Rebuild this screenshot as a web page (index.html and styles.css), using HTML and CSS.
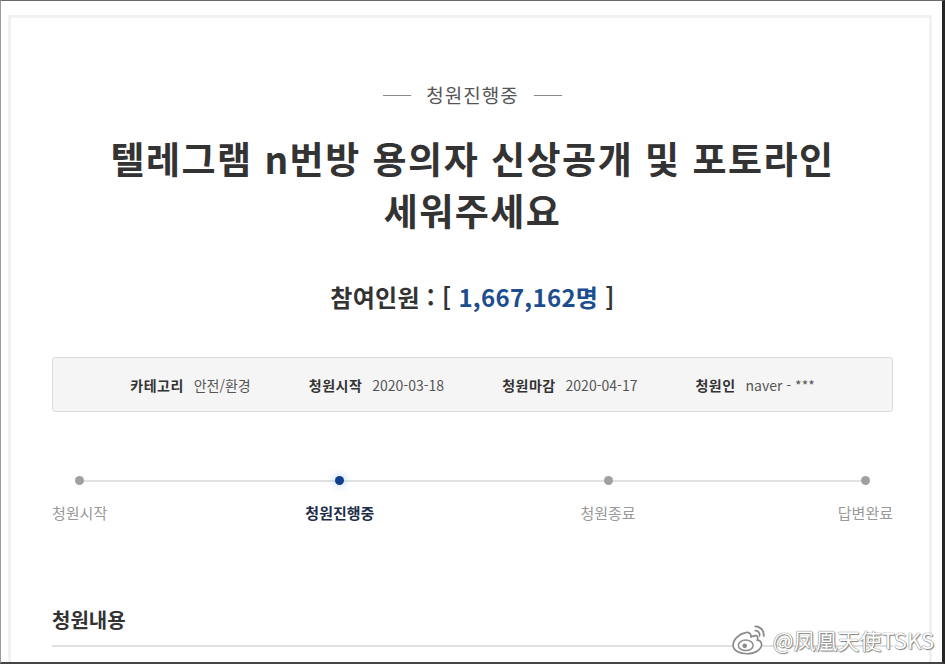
FILE: index.html
```html
<!DOCTYPE html>
<html lang="ko">
<head>
  <meta charset="utf-8">
  <title>청원진행중 - 텔레그램 n번방 용의자 신상공개 및 포토라인 세워주세요</title>
  <link rel="stylesheet" href="styles.css">
</head>
<body>
  <div class="frame">
    <div class="card">
      <div class="tag"><span class="dash"></span>청원진행중<span class="dash"></span></div>

      <h1 class="title">텔레그램 n번방 용의자 신상공개 및 포토라인<br>세워주세요</h1>

      <div class="count">참여인원 : [ <span class="num">1,667,162명</span> ]</div>

      <div class="info">
        <div class="info-item"><b>카테고리</b> 안전/환경</div>
        <div class="info-item"><b>청원시작</b> 2020-03-18</div>
        <div class="info-item"><b>청원마감</b> 2020-04-17</div>
        <div class="info-item"><b>청원인</b> naver - ***</div>
      </div>

      <div class="steps">
        <div class="step"><span class="dot"></span>청원시작</div>
        <div class="step active"><span class="dot"></span>청원진행중</div>
        <div class="step"><span class="dot"></span>청원종료</div>
        <div class="step"><span class="dot"></span>답변완료</div>
      </div>

      <h2 class="section">청원내용</h2>
    </div>

    <div class="watermark">
      <svg class="weibo" width="38" height="34" viewBox="0 0 36 32">
        <path d="M14 10c-6 1-12 6-12 12 0 5 6 8 13 8 8 0 14-4 14-9 0-3-3-4-4-4 1-3 0-5-3-4l-3 1c0-3-2-5-5-4z" fill="#fff" stroke="#8a8a8a" stroke-width="1.6"/>
        <ellipse cx="14" cy="22" rx="7" ry="5" fill="#fff" stroke="#8a8a8a" stroke-width="1.4"/>
        <circle cx="13" cy="22.5" r="2.2" fill="#8a8a8a"/>
        <path d="M23 4a8 8 0 0 1 8 9" fill="none" stroke="#8a8a8a" stroke-width="1.8" stroke-linecap="round"/>
        <path d="M23 8a4 4 0 0 1 4 5" fill="none" stroke="#8a8a8a" stroke-width="1.6" stroke-linecap="round"/>
      </svg>
      <span>@凤凰天使TSKS</span>
    </div>
  </div>
</body>
</html>
```

FILE: styles.css
```css
* {
  box-sizing: border-box;
  margin: 0;
  padding: 0;
}

body {
  font-family: "Noto Sans CJK KR", "Noto Sans", sans-serif;
  background-color: #fff;
  color: #333;
}

.frame {
  position: relative;
  width: 945px;
  height: 664px;
  overflow: hidden;
  border-top: 1px solid #6a6a6a;
  border-left: 1px solid #9a9a9a;
  border-right: 3px solid #262626;
  border-bottom: 2px solid #444;
  padding: 14px 10px 0 7px;
}

.card {
  height: 100%;
  border: 3px solid #f1f1f1;
  border-bottom: 0;
  padding: 65px 36px 0 41px;
}

/* status tag */
.tag {
  display: flex;
  justify-content: center;
  align-items: center;
  gap: 15px;
  font-size: 19px;
  line-height: 24px;
  letter-spacing: 1px;
  color: #555;
}
.dash {
  width: 28px;
  height: 1px;
  background-color: #888;
}

.title {
  margin-top: 25px;
  text-align: center;
  font-size: 37px;
  line-height: 52px;
  font-weight: bold;
  color: #333;
  letter-spacing: 1.5px;
}

.count {
  margin-top: 45px;
  text-align: center;
  font-size: 24px;
  line-height: 32px;
  font-weight: bold;
  letter-spacing: 0.3px;
  color: #333;
}
.count .num {
  color: #1c4e8e;
}

/* info box */
.info {
  margin-top: 44px;
  height: 55px;
  display: flex;
  justify-content: center;
  align-items: center;
  gap: 58px;
  background-color: #f5f5f5;
  border: 1px solid #dcdcdc;
  border-radius: 3px;
  font-size: 14px;
  color: #555;
}
.info-item b {
  color: #333;
  margin-right: 6px;
  letter-spacing: 0.5px;
}

/* progress */
.steps {
  position: relative;
  margin-top: 64px;
  display: flex;
  justify-content: space-between;
}
.steps::before {
  content: "";
  position: absolute;
  top: 4px;
  left: 27px;
  right: 27px;
  height: 2px;
  background-color: #e2e2e2;
}
.step {
  position: relative;
  display: flex;
  flex-direction: column;
  align-items: center;
  gap: 18px;
  font-size: 15px;
  line-height: 20px;
  color: #999;
}
.dot {
  width: 9px;
  height: 9px;
  border-radius: 50%;
  background-color: #a0a0a0;
}
.step.active {
  color: #1f2f4a;
  font-weight: bold;
  left: -4px;
}
.step.active .dot {
  background-color: #0d3f8c;
  box-shadow: 0 0 6px 3px rgba(120, 170, 230, 0.25);
}

.section {
  margin-top: 83px;
  padding-bottom: 11px;
  border-bottom: 2px solid #e0e0e0;
  font-size: 20px;
  line-height: 28px;
  font-weight: bold;
  color: #333;
}

/* watermark over the corner */
.watermark {
  position: absolute;
  right: 8px;
  bottom: 6px;
  display: flex;
  align-items: center;
  gap: 4px;
  font-family: "Noto Sans CJK SC", sans-serif;
  font-size: 22px;
  color: #fff;
  text-shadow: 0 0 1px #777, 0 0 1px #777, 1px 1px 1px #888;
}
```
